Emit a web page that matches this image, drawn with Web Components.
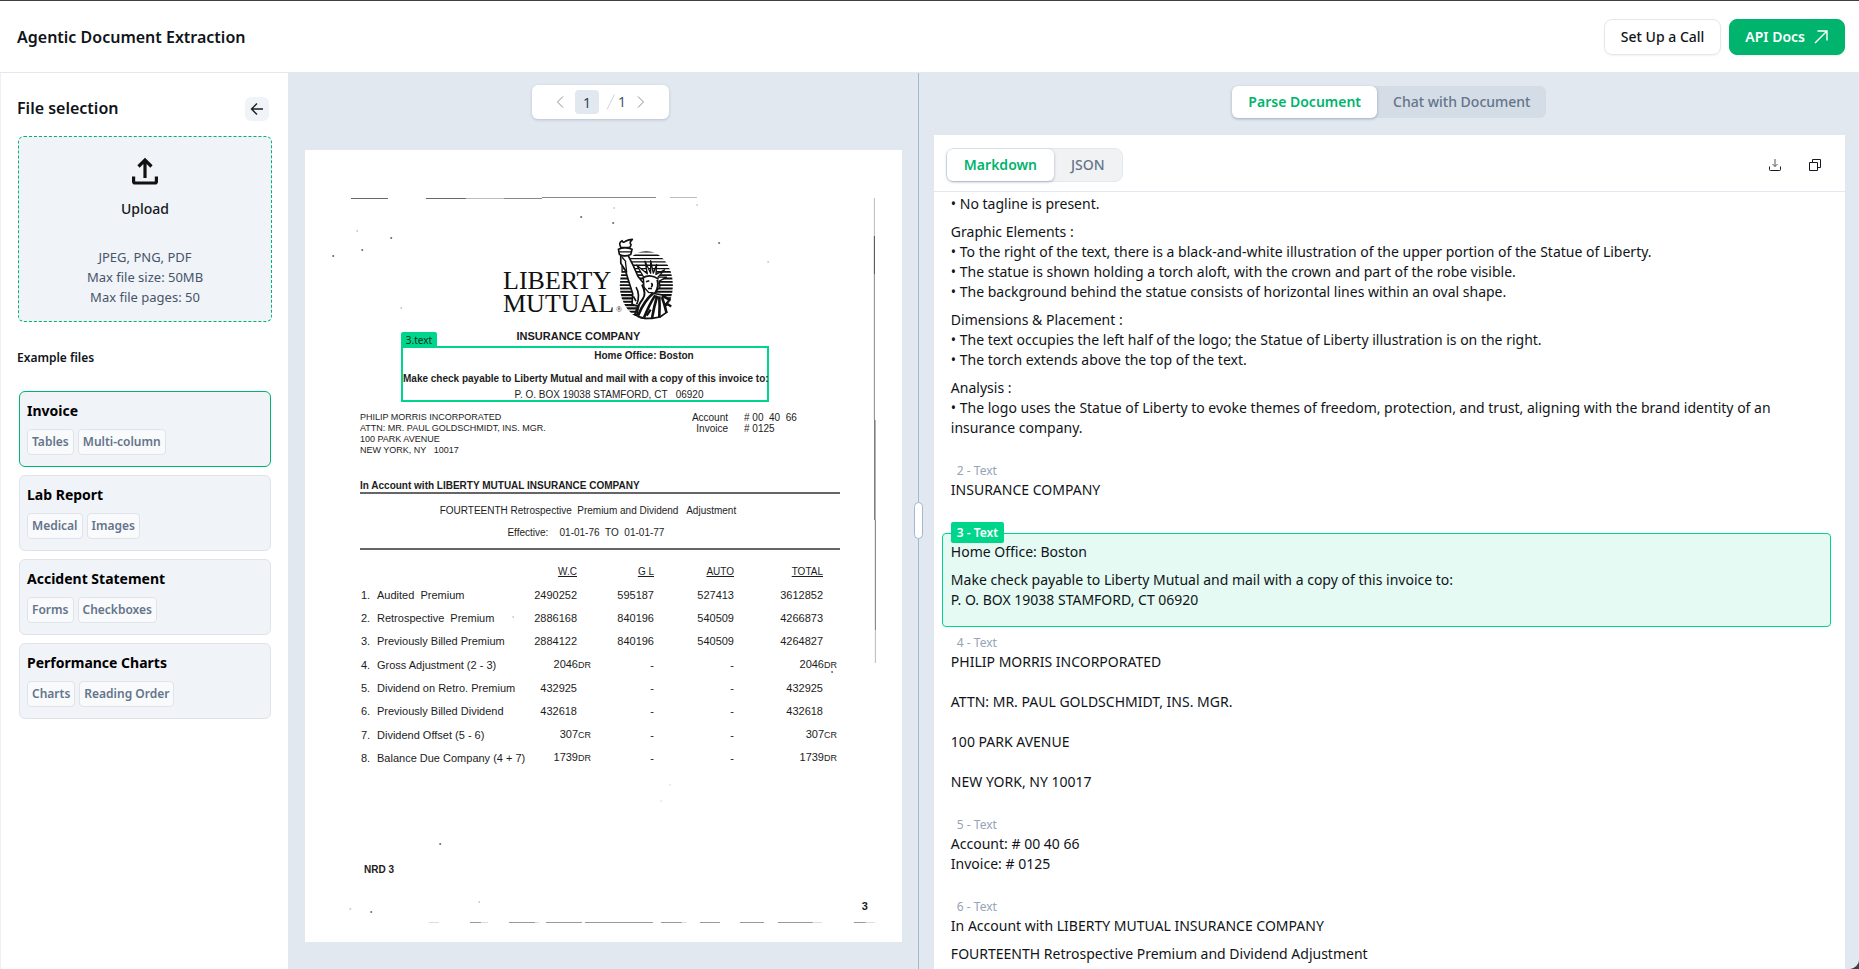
<!DOCTYPE html>
<html lang="en">
<head>
<meta charset="utf-8">
<title>Agentic Document Extraction</title>
<style>
  html, body { margin: 0; height: 100%; }
  body {
    background: #3f3f44;
    font-family: "Noto Sans", "Open Sans", sans-serif;
    font-size: 14px;
    line-height: 20px;
    color: #101418;
    --green: #00b46e;
    --mint: #00d68b;
    --canvas: #e1e8ef;
    --soft: #f0f3f8;
    --slate: #64748b;
  }
</style>
</head>
<body>
<ade-app></ade-app>

<script>
const define = (name, html, init) => {
  const template = document.createElement('template');
  template.innerHTML = html;
  customElements.define(name, class extends HTMLElement {
    constructor() {
      super();
      this.attachShadow({ mode: 'open' }).append(template.content.cloneNode(true));
    }
    connectedCallback() { if (init) init(this, this.shadowRoot); }
  });
};

/* Top bar with the title and the two actions */
define('ade-header', `
<style>
  :host { display: flex; align-items: center; justify-content: space-between; height: 72px; padding: 1px 14px 0 17px;
    box-sizing: border-box; background: #fff; border-bottom: 1px solid var(--canvas); }
  h1 { margin: 0; font-size: 16px; line-height: 24px; font-weight: 600; }
  nav { display: flex; gap: 8px; }
  a { display: flex; align-items: center; gap: 8px; height: 36px; padding: 0 16px; box-sizing: border-box; border-radius: 8px;
    border: 1px solid #e4e7eb; color: #101418; text-decoration: none; font-weight: 500; box-shadow: 0 1px 2px rgba(0,0,0,.06); }
  a.primary { padding: 0 15px; background: var(--green); border-color: var(--green); color: #fff; font-weight: 600; }
</style>
<h1>Agentic Document Extraction</h1>
<nav>
  <a href="#call">Set Up a Call</a>
  <a class="primary" href="#docs">API Docs
    <svg width="16" height="16" viewBox="0 0 16 16" fill="none" stroke="currentColor" stroke-width="1.4"><path d="M2 14 14 2M4.500 2H14v9.500"/></svg>
  </a>
</nav>`);

/* One example file with its tags */
define('example-card', `
<style>
  :host { display: block; }
  button { display: flex; flex-direction: column; gap: 8px; width: 100%; padding: 9px 7px 7px; text-align: left;
    font: inherit; color: #000; background: var(--soft); border: 1px solid #e0e3e8; border-radius: 6px; height: 76px; }
  :host([selected]) button { border-color: var(--green); }
  b { font-weight: 700; font-size: 14px; line-height: 20px; }
  span { display: flex; gap: 4px; }
</style>
<button type="button"><b></b><span><slot></slot></span></button>`,
(host, root) => { root.querySelector('b').textContent = host.getAttribute('name'); });

define('file-tag', `
<style>
  :host { display: block; padding: 0 4px; border: 1px solid #e0e3e8; border-radius: 4px; background: #f9fafc;
    color: var(--slate); font-size: 12px; line-height: 24px; font-weight: 600; white-space: nowrap; }
</style><slot></slot>`);

define('file-sidebar', `
<style>
  :host { display: block; background: #fff; border-left: 1px solid #edf1f7; padding: 24px 16px; box-sizing: border-box; }
  header { display: flex; align-items: center; justify-content: space-between; padding-right: 3px; margin-bottom: 15px; }
  h2 { margin: 0; font-size: 16px; line-height: 22px; font-weight: 600; padding-bottom: 2px; }
  .back { display: grid; place-items: center; width: 24px; height: 24px; padding: 0; border: 0; border-radius: 6px; background: var(--soft); }
  .upload { display: flex; flex-direction: column; align-items: center; width: 254px; height: 186px; padding: 20px 0 0; box-sizing: border-box;
    margin-left: 1px; border: 1px dashed var(--green); border-radius: 6px; background: var(--soft); font: inherit; color: #14171c; }
  .upload b { font-weight: 500; margin: 14px 0 28px; }
  .upload small { font-size: 13px; line-height: 20px; color: #475569; }
  h3 { margin: 26px 0 23px; font-size: 12px; line-height: 20px; font-weight: 600; }
  section { display: grid; gap: 8px; width: 252px; margin-left: 2px; }
</style>
<header>
  <h2>File selection</h2>
  <button class="back" type="button" aria-label="Collapse">
    <svg width="14" height="14" viewBox="0 0 14 14" fill="none" stroke="#1c1f24" stroke-width="1.400"><path d="M13 7H2M7 1.500 1.500 7 7 12.500"/></svg>
  </button>
</header>
<button class="upload" type="button">
  <svg width="28" height="28" viewBox="0 0 28 28" fill="none" stroke="#111" stroke-width="3.200"><path d="M14 21V4M7.500 9.500 14 3l6.500 6.500"/><path d="M2.600 19.500v5q0 1.500 1.500 1.500h19.800q1.500 0 1.500-1.500v-5"/></svg>
  <b>Upload</b>
  <small>JPEG, PNG, PDF</small><small>Max file size: 50MB</small><small>Max file pages: 50</small>
</button>
<h3>Example files</h3>
<section>
  <example-card name="Invoice" selected><file-tag>Tables</file-tag><file-tag>Multi-column</file-tag></example-card>
  <example-card name="Lab Report"><file-tag>Medical</file-tag><file-tag>Images</file-tag></example-card>
  <example-card name="Accident Statement"><file-tag>Forms</file-tag><file-tag>Checkboxes</file-tag></example-card>
  <example-card name="Performance Charts"><file-tag>Charts</file-tag><file-tag>Reading Order</file-tag></example-card>
</section>`);

define('page-pager', `
<style>
  :host { display: flex; align-items: center; justify-content: center; gap: 2px; width: 137px; height: 34px; background: #fff;
    border-radius: 6px; box-shadow: 0 1px 3px rgba(60,80,110,.25); color: #475569; }
  button { display: grid; padding: 0; border: 0; background: none; }
  button:last-child { margin-left: 8px; }
  input { width: 24px; height: 24px; padding: 0; border: 0; border-radius: 4px; background: var(--canvas); text-align: center; font: inherit; color: #334155; margin: 0 5px 0 8px; }
  .slash { display: block; }
</style>
<button type="button" aria-label="Previous page"><svg width="10" height="12" viewBox="0 0 10 12" fill="none" stroke="#8b8f96"><path d="M8 .5 2.500 6 8 11.500"/></svg></button>
<input value="1" aria-label="Page">
<svg class="slash" width="10" height="16" viewBox="0 0 10 16" stroke="#cbd5e1"><path d="M8.500 .5 1 15.500"/></svg>
<span>1</span>
<button type="button" aria-label="Next page"><svg width="10" height="12" viewBox="0 0 10 12" fill="none" stroke="#8b8f96"><path d="M2 .5 7.500 6 2 11.500"/></svg></button>`);

/* Oval emblem with the statue over horizontal lines */
define('liberty-emblem', `
<style>:host { display: block; } svg { display: block; }</style>
<svg width="60" height="83" viewBox="0 0 180 250">
  <clipPath id="oval"><ellipse cx="91" cy="142" rx="80" ry="103"/></clipPath>
  <g clip-path="url(#oval)" stroke="#111">
    <path stroke-width="4" d="M0 42H180M0 52H180M0 62H180M0 72H180M0 82H180M0 92H180"/>
    <path stroke-width="5.500" d="M0 102H180M0 112H180M0 122H180M0 132H180M0 142H180M0 152H180"/>
    <path stroke-width="6.500" d="M0 162H180M0 172H180M0 182H180M0 192H180M0 202H180M0 212H180M0 222H180M0 232H180M0 242H180"/>
  </g>
  <path fill="#fff" stroke="#111" stroke-width="5" stroke-linejoin="round" d="M14 54 36 52 52 84 66 116 84 138 92 150 118 168 142 172 160 186 146 204 152 224 132 238 108 242 84 242 62 234 68 206 48 200 50 168 38 130 28 98 14 76Z"/>
  <path fill="#fff" stroke="#111" stroke-width="5" stroke-linejoin="round" d="M7 34Q26 24 48 34L44 50Q26 58 10 50Z"/>
  <path fill="#fff" stroke="#111" stroke-width="5" stroke-linejoin="round" d="M14 28Q6 14 18 8Q20 16 28 10Q38 4 49 4Q38 14 45 20Q44 26 40 29Z"/>
  <path fill="none" stroke="#111" stroke-width="4" d="M9 42H46M18 58 30 72M18 84V104M28 72 32 104"/>
  <path fill="#fff" stroke="#111" stroke-width="4" stroke-linejoin="round" d="M82 116 62 82 94 108 87 70 104 106 104 68 112 106 122 80 120 110 146 96 126 118 152 118 130 130 132 148 122 158 116 166 98 164 84 148Z"/>
  <g fill="none" stroke="#111" stroke-width="5">
    <path d="M80 120Q104 106 128 124M90 132l10-3M106 136q6 6 0 12M96 152l12 0"/>
    <path stroke-width="6" d="M124 126Q130 146 118 166M78 140Q92 168 80 184Q66 202 56 232"/>
    <path d="M60 148Q74 172 62 200M52 176 60 190"/>
    <path stroke-width="8" d="M112 166Q84 190 66 234M118 172Q100 200 84 240M124 174Q114 206 108 242M130 176Q132 204 130 240M138 178Q146 200 152 226"/>
    <path stroke-width="7" d="M92 234 104 216M138 174 164 188M150 196 166 206"/>
  </g>
</svg>`);

/* The scanned invoice sheet */
define('invoice-scan', `
<style>
  :host { display: block; position: relative; background: #fff; height: 792px; box-sizing: border-box; padding: 88px 57px 0 55px;
    font-family: "Liberation Sans", Arial, sans-serif; font-size: 10px; line-height: 12px; color: #1c1c1c; overflow: hidden; white-space: nowrap; }
  .noise { position: absolute; inset: 0; width: 100%; height: 100%; pointer-events: none; }
  .brand { position: relative; display: grid; grid-template-columns: 113px 60px; align-items: start; padding-left: 143px; height: 92px; }
  .brand p { margin: 31px 0 0; font-family: "Liberation Serif", serif; font-size: 26px; line-height: 23px; color: #111; }
  .brand sup { position: absolute; left: 256px; top: 66px; font-family: "Liberation Serif", serif; font-size: 8px; line-height: 12px; }
  h4 { margin: 0 48px 4px 0; font-size: 11px; line-height: 12px; text-align: center; }
  .field { position: relative; width: 364px; height: 52px; margin-left: 41px; border: 2px solid var(--mint); }
  .field p { margin: 0; text-align: center; }
  .field .home { padding: 2px 0 11px 118px; font-weight: 700; }
  .field .pay { font-weight: 700; padding-bottom: 4px; }
  .field .box { padding-left: 48px; }
  .field label { position: absolute; left: -2px; bottom: 52px; width: 36px; height: 16px; background: var(--mint); border-radius: 2px 2px 0 0;
    font: 10px/16px "Noto Sans", sans-serif; text-align: center; color: #06301f; }
  .parties { display: flex; justify-content: space-between; padding: 10px 48px 0 0; }
  .parties p { margin: 0; font-size: 9px; line-height: 11px; }
  .parties dl { display: grid; grid-template-columns: auto auto; column-gap: 16px; margin: 0; line-height: 11px; align-content: start; }
  dt { text-align: right; } dd { margin: 0; }
  .for { margin: 24px 5px 0 0; border-bottom: 2px solid #666; font-weight: 700; }
  .period { margin: 0 5px 0 0; padding: 11px 24px 9px 0; text-align: center; border-bottom: 2px solid #666; }
  .period span { display: block; padding-bottom: 10px; }
  .period span + span { padding: 0 4px 0 0; }
  table { width: 476px; margin: 10px 0 0 1px; table-layout: fixed; border-collapse: collapse; font-size: 11px; }
  tr { height: 23px; } tr:nth-child(3n) { height: 24px; }
  td, th { padding: 0 14px 0 0; text-align: right; font-weight: 400; }
  th { text-decoration: underline; font-size: 10px; }
  td:nth-child(-n+2) { text-align: left; padding: 0; }
  td.s { padding: 0; }
  td small { font-size: 9px; }
  .c1 { width: 16px; } .c2 { width: 140px; } .c3 { width: 74px; } .c4 { width: 77px; } .c5 { width: 80px; }
  footer { display: flex; justify-content: space-between; margin-right: -23px; padding: 95px 0 0 4px; font-weight: 700; }
  footer b:last-child { margin-top: 36px; font-size: 11px; }
</style>
<svg class="noise" viewBox="0 0 597 792" fill="none" stroke="#777" preserveAspectRatio="none">
  <path d="M46 48.500H83M121 48.500H161" stroke="#666"/>
  <path d="M161 48.500H199M365 47.500H392" stroke="#bbb"/>
  <path d="M199 48.500H237M237 47.500H351" stroke="#888"/>
  <path d="M569.500 48V86" stroke="#bbb"/><path d="M569.500 86V124" stroke="#444"/><path d="M569.500 124V270" stroke="#888"/>
  <path d="M570 270V370" stroke="#333"/><path d="M570.500 370V480" stroke="#777"/><path d="M570.500 480V513" stroke="#bbb"/>
  <path stroke="#999" d="M165 772.500H176M204 772.500H230M241 772.500H277M280 772.500H348M356 772.500H377M395 772.500H415M435 772.500H459M473 772.500H508M549 772.500H561"/>
  <path stroke="#ddd" d="M176 772.500H183M230 772.500H234M377 772.500H382M508 772.500H517M561 772.500H570M124 772.500H134"/>
  <path stroke="#444" stroke-width="1.600" stroke-linecap="round" d="M276 67h.5M308 73h.5M86 88h.5M57 100h.5M28 106h.5M414 93h.5M135 694h.5M66 762h.5M527 522h.5"/>
  <path stroke="#bbb" stroke-width="1.400" stroke-linecap="round" d="M309 58h.5M52 81h.5M463 112h.5M392 55h.5M96 158h.5M45 759h.5M174 752h.5M208 467h.5"/>
  <path stroke="#ddd" stroke-width="1.400" stroke-linecap="round" d="M365 635h.5M356 651h.5"/>
</svg>
<div class="brand"><p>LIBERTY<br>MUTUAL</p><liberty-emblem></liberty-emblem><sup>®</sup></div>
<h4>INSURANCE COMPANY</h4>
<div class="field">
  <label>3.text</label>
  <p class="home">Home Office: Boston</p>
  <p class="pay">Make check payable to Liberty Mutual and mail with a copy of this invoice to:</p>
  <p class="box">P. O. BOX 19038 STAMFORD, CT &nbsp; 06920</p>
</div>
<div class="parties">
  <p>PHILIP MORRIS INCORPORATED<br>ATTN: MR. PAUL GOLDSCHMIDT, INS. MGR.<br>100 PARK AVENUE<br>NEW YORK, NY &nbsp; 10017</p>
  <dl><dt>Account</dt><dd># 00 &nbsp;40 &nbsp;66</dd><dt>Invoice</dt><dd># 0125</dd></dl>
</div>
<p class="for">In Account with LIBERTY MUTUAL INSURANCE COMPANY</p>
<p class="period"><span>FOURTEENTH Retrospective &nbsp;Premium and Dividend &nbsp; Adjustment</span><span>Effective: &nbsp;&nbsp; 01-01-76 &nbsp;TO &nbsp;01-01-77</span></p>
<table>
  <colgroup><col class="c1"><col class="c2"><col class="c3"><col class="c4"><col class="c5"><col></colgroup>
  <thead><tr><td></td><td></td><th>W.C</th><th>G L</th><th>AUTO</th><th>TOTAL</th></tr></thead>
  <tbody>
    <tr><td>1.</td><td>Audited &nbsp;Premium</td><td>2490252</td><td>595187</td><td>527413</td><td>3612852</td></tr>
    <tr><td>2.</td><td>Retrospective &nbsp;Premium</td><td>2886168</td><td>840196</td><td>540509</td><td>4266873</td></tr>
    <tr><td>3.</td><td>Previously Billed Premium</td><td>2884122</td><td>840196</td><td>540509</td><td>4264827</td></tr>
    <tr><td>4.</td><td>Gross Adjustment (2 - 3)</td><td class="s">2046<small>DR</small></td><td>-</td><td>-</td><td class="s">2046<small>DR</small></td></tr>
    <tr><td>5.</td><td>Dividend on Retro. Premium</td><td>432925</td><td>-</td><td>-</td><td>432925</td></tr>
    <tr><td>6.</td><td>Previously Billed Dividend</td><td>432618</td><td>-</td><td>-</td><td>432618</td></tr>
    <tr><td>7.</td><td>Dividend Offset (5 - 6)</td><td class="s">307<small>CR</small></td><td>-</td><td>-</td><td class="s">307<small>CR</small></td></tr>
    <tr><td>8.</td><td>Balance Due Company (4 + 7)</td><td class="s">1739<small>DR</small></td><td>-</td><td>-</td><td class="s">1739<small>DR</small></td></tr>
  </tbody>
</table>
<footer><b>NRD 3</b><b>3</b></footer>`);

define('document-pane', `
<style>
  :host { display: flex; flex-direction: column; align-items: center; position: relative; background: var(--canvas); border-right: 1px solid #a3b7cf;
    padding: 12px 16px 26px 17px; box-sizing: border-box; }
  page-pager { margin-right: 6px; }
  invoice-scan { width: 100%; margin-top: 31px; }
  .grip { position: absolute; right: -5px; top: 429px; width: 7px; height: 35px; padding: 0; box-sizing: content-box;
    border: 1px solid #a3b7cf; border-radius: 5px; background: #fff; z-index: 1; }
</style>
<page-pager></page-pager>
<invoice-scan></invoice-scan>
<button class="grip" type="button" aria-label="Resize panes"></button>`);

/* Two-way switch; the first option is the active one */
define('seg-switch', `
<style>
  :host { display: inline-flex; height: 32px; border-radius: 6px; background: #d4dce6; box-sizing: border-box; }
  :host([outlined]) { height: 34px; background: #f1f2f4; border: 1px solid #e1e8f0; border-radius: 8px; }
  button { border: 0; background: none; padding: 0 16px; font: inherit; font-weight: 500; color: var(--slate); border-radius: 6px; }
  :host([outlined]) button { padding: 0 17px; }
  button.on { color: var(--green); background: #fff; box-shadow: 0 1px 3px rgba(60,80,110,.4); font-weight: 600; }
</style>
<button class="on" type="button"></button><button type="button"></button>`,
(host, root) => {
  host.getAttribute('options').split('|').forEach((t, i) => { root.querySelectorAll('button')[i].textContent = t; });
});

/* A parsed chunk with its label sitting on the top edge */
define('parsed-chunk', `
<style>
  :host { display: block; position: relative; border: 1px solid transparent; border-radius: 4px; padding: 8px 8px 16px; margin-bottom: 16px; }
  .tag { position: absolute; left: 8px; top: -12px; padding: 0 6px; font-size: 12px; line-height: 21px; color: #94a3b8; border-radius: 2px; }
  :host([active]) { border-color: var(--mint); background: #e4faf3; }
  :host([active]) .tag { background: var(--mint); color: #fff; font-weight: 600; }
  ::slotted(p) { margin: 0 0 8px; }
  ::slotted(p:last-child) { margin: 0; }
</style>
<span class="tag"></span><slot></slot>`,
(host, root) => { root.querySelector('.tag').textContent = host.getAttribute('label') || ''; });

define('result-pane', `
<style>
  :host { display: flex; flex-direction: column; align-items: center; background: var(--canvas); padding: 13px 14px 0 15px; box-sizing: border-box; min-height: 0; }
  .sheet { align-self: stretch; flex: 1; min-height: 0; display: flex; flex-direction: column; margin-top: 17px; background: #fff; }
  .bar { display: flex; align-items: center; gap: 28px; height: 57px; padding: 3px 24px 0 12px; box-sizing: border-box; border-bottom: 1px solid #e1e8f0; margin-bottom: 2px; }
  .bar seg-switch { margin-right: auto; }
  .bar button { display: grid; padding: 0; border: 0; background: none; }
  .text { flex: 1; min-height: 0; overflow: hidden; padding: 0 14px 0 8px; }
  parsed-chunk:first-child { margin-top: -9px; }
</style>
<seg-switch options="Parse Document|Chat with Document"></seg-switch>
<div class="sheet">
  <div class="bar">
    <seg-switch outlined options="Markdown|JSON"></seg-switch>
    <button type="button" aria-label="Download"><svg width="12" height="12" viewBox="0 0 12 12" fill="none" stroke="#16191d"><path d="M6 0v7.500M3.500 5 6 7.500 8.500 5" stroke="#555"/><path d="M.5 7.500v3q0 1 1 1h9q1 0 1-1v-3"/></svg></button>
    <button type="button" aria-label="Copy"><svg width="12" height="12" viewBox="0 0 12 12" fill="none" stroke="#16191d"><path d="M.5 3.500H8.500V11.500H.5ZM3.500 3.500V.5H11.500V8.500H8.500"/></svg></button>
  </div>
  <div class="text">
    <parsed-chunk>
      <p>• No tagline is present.</p>
      <p>Graphic Elements :<br>• To the right of the text, there is a black-and-white illustration of the upper portion of the Statue of Liberty.<br>• The statue is shown holding a torch aloft, with the crown and part of the robe visible.<br>• The background behind the statue consists of horizontal lines within an oval shape.</p>
      <p>Dimensions &amp; Placement :<br>• The text occupies the left half of the logo; the Statue of Liberty illustration is on the right.<br>• The torch extends above the top of the text.</p>
      <p>Analysis :<br>• The logo uses the Statue of Liberty to evoke themes of freedom, protection, and trust, aligning with the brand identity of an insurance company.</p>
    </parsed-chunk>
    <parsed-chunk label="2 - Text"><p>INSURANCE COMPANY</p></parsed-chunk>
    <parsed-chunk label="3 - Text" active><p>Home Office: Boston</p><p>Make check payable to Liberty Mutual and mail with a copy of this invoice to:<br>P. O. BOX 19038 STAMFORD, CT 06920</p></parsed-chunk>
    <parsed-chunk label="4 - Text"><p>PHILIP MORRIS INCORPORATED<br><br>ATTN: MR. PAUL GOLDSCHMIDT, INS. MGR.<br><br>100 PARK AVENUE<br><br>NEW YORK, NY 10017</p></parsed-chunk>
    <parsed-chunk label="5 - Text"><p>Account: # 00 40 66<br>Invoice: # 0125</p></parsed-chunk>
    <parsed-chunk label="6 - Text"><p>In Account with LIBERTY MUTUAL INSURANCE COMPANY</p><p>FOURTEENTH Retrospective Premium and Dividend Adjustment</p></parsed-chunk>
  </div>
</div>`);

define('ade-app', `
<style>
  :host { display: flex; flex-direction: column; height: 100vh; padding-top: 1px; box-sizing: border-box; }
  main { flex: 1; min-height: 0; display: grid; grid-template-columns: 288px minmax(0, 51fr) minmax(0, 76fr); grid-template-rows: minmax(0, 1fr);
    background: var(--canvas); border-radius: 0 0 10px 0; overflow: hidden; }
</style>
<ade-header></ade-header>
<main><file-sidebar></file-sidebar><document-pane></document-pane><result-pane></result-pane></main>`);
</script>
</body>
</html>
